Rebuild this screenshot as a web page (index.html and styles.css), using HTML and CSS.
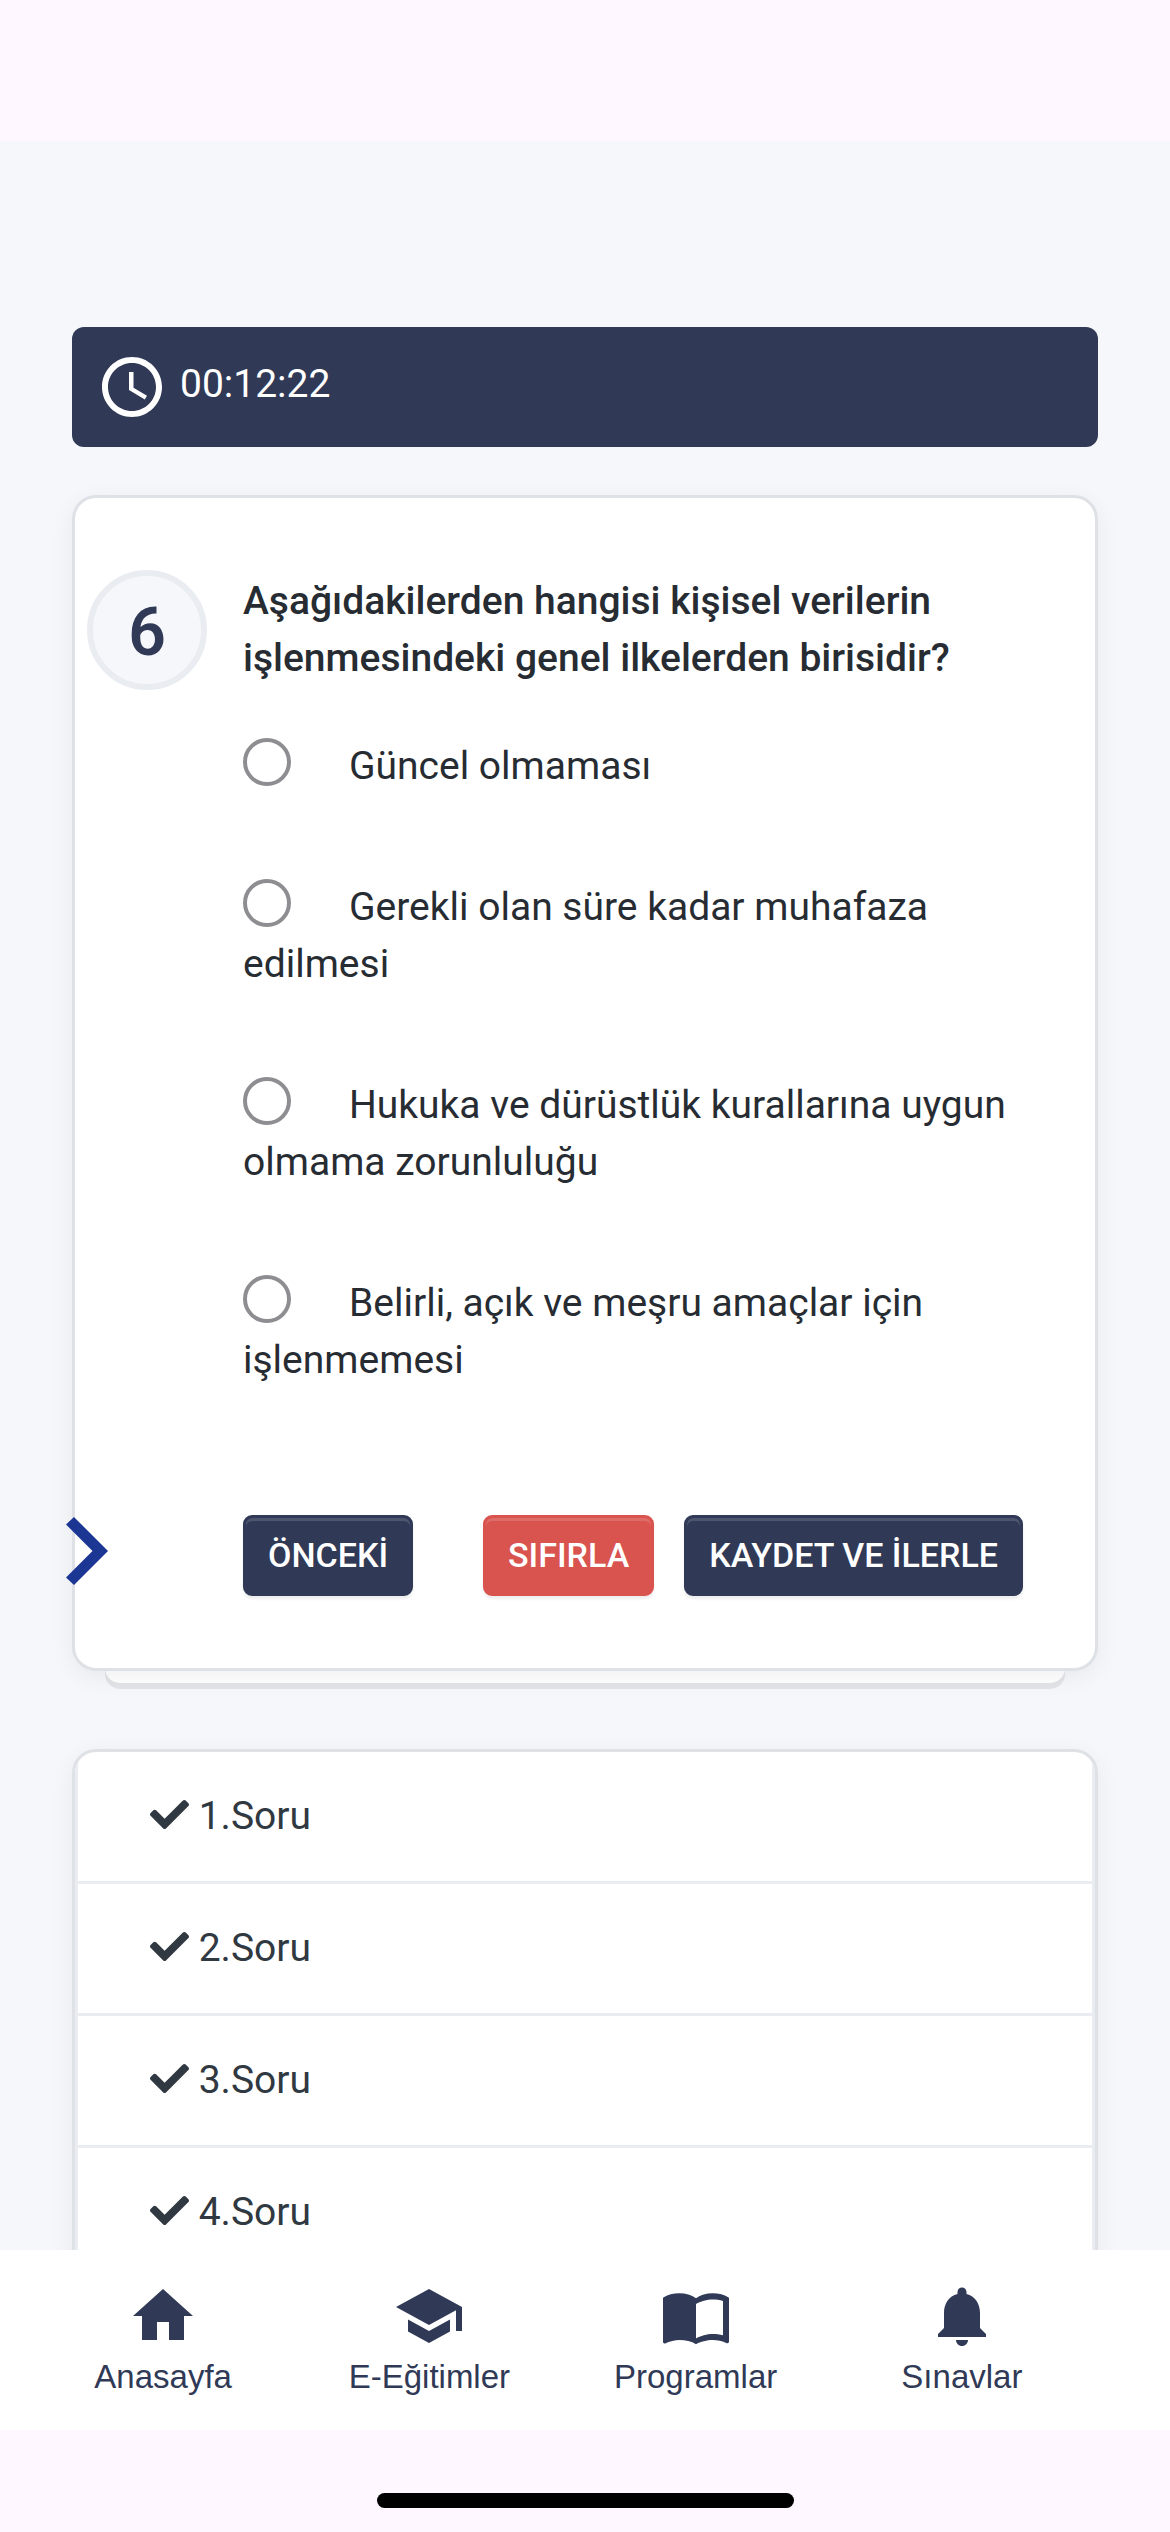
FILE: index.html
```html
<!DOCTYPE html>
<html lang="tr">
<head>
    <meta charset="UTF-8">
    <meta name="viewport" content="width=device-width, initial-scale=1.0">
    <title>Sınav</title>
    <link rel="stylesheet" href="styles.css">
</head>
<body>

<div class="status-bar"></div>

<main class="content">
    <div class="timer">
        <svg class="timer-icon" viewBox="2 2 20 20" aria-hidden="true">
            <path d="M11.99 2C6.47 2 2 6.48 2 12s4.47 10 9.99 10C17.52 22 22 17.52 22 12S17.52 2 11.99 2zM12 20c-4.42 0-8-3.58-8-8s3.58-8 8-8 8 3.58 8 8-3.58 8-8 8zm.5-13H11v6l5.25 3.15.75-1.23-4.5-2.67z"/>
        </svg>
        <span>00:12:22</span>
    </div>

    <form class="card question-card">
        <div class="question-number">6</div>
        <div class="question-body">
            <h1 class="question-text">Aşağıdakilerden hangisi kişisel verilerin işlenmesindeki genel ilkelerden birisidir?</h1>

            <label class="option"><input type="radio" name="cevap" value="a">Güncel olmaması</label>
            <label class="option"><input type="radio" name="cevap" value="b">Gerekli olan süre kadar muhafaza edilmesi</label>
            <label class="option"><input type="radio" name="cevap" value="c">Hukuka ve dürüstlük kurallarına uygun olmama zorunluluğu</label>
            <label class="option"><input type="radio" name="cevap" value="d">Belirli, açık ve meşru amaçlar için işlenmemesi</label>

            <div class="actions">
                <button type="button" class="btn">ÖNCEKİ</button>
                <div class="actions-right">
                    <button type="reset" class="btn btn-danger">SIFIRLA</button>
                    <button type="submit" class="btn">KAYDET VE İLERLE</button>
                </div>
            </div>
        </div>
        <button type="button" class="drawer-toggle" aria-label="Menü">
            <svg viewBox="0 0 42 68" aria-hidden="true">
                <path d="M8 0L42 34 8 68 0 60.500 26.500 34 0 7.500z"/>
            </svg>
        </button>
    </form>

    <ul class="card question-list">
        <li><svg class="check" viewBox="0 0 512 512"><use href="#check"/></svg> 1.Soru</li>
        <li><svg class="check" viewBox="0 0 512 512"><use href="#check"/></svg> 2.Soru</li>
        <li><svg class="check" viewBox="0 0 512 512"><use href="#check"/></svg> 3.Soru</li>
        <li><svg class="check" viewBox="0 0 512 512"><use href="#check"/></svg> 4.Soru</li>
    </ul>
</main>

<nav class="bottom-nav">
    <a href="#">
        <svg viewBox="0 0 24 24" aria-hidden="true"><path d="M10 20v-6h4v6h5v-8h3L12 3 2 12h3v8z"/></svg>
        Anasayfa
    </a>
    <a href="#">
        <svg viewBox="0 0 24 24" aria-hidden="true"><path d="M5 13.180v4L12 21l7-3.820v-4L12 17l-7-3.820zM12 3L1 9l11 6 9-4.910V17h2V9L12 3z"/></svg>
        E-Eğitimler
    </a>
    <a href="#">
        <svg viewBox="0 0 24 24" aria-hidden="true"><path d="M12 6.050C10.500 4.900 8.500 4.400 6.500 4.400S2.450 4.800 1 5.900v14.800c0 .25.25.5.5.5.1 0 .15-.05.25-.05C3.100 20.450 5.050 20 6.500 20c1.950 0 4.050.4 5.500 1.400 1.350-.85 3.800-1.400 5.500-1.400 1.650 0 3.350.3 4.750 1.050.1.05.15.05.25.05.25 0 .5-.25.5-.5V5.900c-1.450-1.100-3.500-1.500-5.500-1.500s-4 .5-5.500 1.650zM21 18.450c-1.100-.35-2.300-.45-3.500-.45-1.700 0-4.150.65-5.500 1.500V8c1.350-.85 3.800-1.500 5.500-1.500 1.200 0 2.400.15 3.500.5z"/></svg>
        Programlar
    </a>
    <a href="#">
        <svg viewBox="0 0 24 24" aria-hidden="true"><path d="M12 22c1.100 0 2-.9 2-2h-4c0 1.100.89 2 2 2zm6-6v-5c0-3.070-1.640-5.640-4.500-6.320V4c0-.83-.67-1.500-1.500-1.500s-1.500.67-1.500 1.500v.68C7.630 5.360 6 7.920 6 11v5l-2 2v1h16v-1l-2-2z"/></svg>
        Sınavlar
    </a>
</nav>

<div class="home-area"><div class="home-indicator"></div></div>

<svg class="symbols" aria-hidden="true">
    <symbol id="check" viewBox="0 0 512 512">
        <path d="M173.898 439.404l-166.400-166.400c-9.997-9.997-9.997-26.206 0-36.204l36.203-36.204c9.997-9.998 26.207-9.998 36.204 0L192 312.690 432.095 72.596c9.997-9.997 26.207-9.997 36.204 0l36.203 36.204c9.997 9.997 9.997 26.206 0 36.204l-294.400 294.401c-9.998 9.997-26.207 9.997-36.204-.001z"/>
    </symbol>
</svg>

</body>
</html>
```

FILE: styles.css
```css
* {
    box-sizing: border-box;
}
body {
    display: flex;
    flex-direction: column;
    height: 100vh;
    margin: 0;
    background-color: #fef7ff;
    color: #272c33;
    font-family: Roboto, sans-serif;
    font-size: 39px;
    line-height: 57px;
}
.status-bar {
    flex: none;
    height: 141px;
}
.content {
    flex: 1;
    min-height: 0;
    padding: 186px 72px 0;
    overflow: hidden;
    isolation: isolate;
    background-color: #f5f7fb;
}

/* timer */
.timer {
    display: flex;
    gap: 18px;
    padding: 30px;
    border-radius: 12px;
    background-color: #303956;
    color: white;
    line-height: 54px;
}
.timer-icon {
    width: 60px;
    height: 60px;
    fill: white;
}

/* cards */
.card {
    border: 3px solid #dee1e6;
    border-radius: 24px;
    background-color: white;
    box-shadow: 0 6px 24px rgba(0,0,0,0.06);
}
.question-card {
    display: flex;
    gap: 36px;
    position: relative;
    margin-top: 48px;
    padding: 72px 72px 72px 12px;
}
.question-card::after {
    content: "";
    position: absolute;
    z-index: -1;
    left: 30px;
    right: 30px;
    bottom: -15px;
    height: 48px;
    border-radius: 0 0 15px 15px;
    background-color: white;
    box-shadow: 0 6px 0 #e2e4e8;
}
.question-number {
    flex: none;
    width: 120px;
    height: 120px;
    border: 6px solid #e9edf2;
    border-radius: 50%;
    background-color: #f5f7fb;
    color: #303956;
    font-size: 66px;
    font-weight: 600;
    line-height: 114px;
    text-align: center;
}
.question-body {
    flex: 1;
    padding-top: 3px;
}
.question-text {
    margin: 0 0 51px;
    font-size: 39px;
    font-weight: 500;
}
.option {
    display: block;
    margin-bottom: 84px;
}
.option input {
    appearance: none;
    width: 48px;
    height: 48px;
    margin: 0 58px 0 0;
    border: 4px solid #8e8d91;
    border-radius: 50%;
    vertical-align: top;
}
.option input:checked {
    border-width: 14px;
    border-color: #303956;
}

/* buttons */
.actions {
    display: flex;
    justify-content: space-between;
    margin-top: 126px;
}
.actions-right {
    display: flex;
    gap: 30px;
}
.btn {
    padding: 12px 22px;
    border: 3px solid #303956;
    border-radius: 9px;
    background-color: #303956;
    box-shadow: inset 0 3px 0 rgba(255,255,255,0.15), 0 3px 3px rgba(0,0,0,0.07);
    color: white;
    font-family: Roboto, sans-serif;
    font-size: 34px;
    font-weight: 500;
    line-height: 51px;
    white-space: nowrap;
}
.btn-danger {
    border-color: #d9534f;
    background-color: #d9534f;
}
.drawer-toggle {
    position: absolute;
    left: -9px;
    bottom: 83px;
    width: 42px;
    height: 68px;
    padding: 0;
    border: none;
    background: none;
}
.drawer-toggle svg {
    display: block;
    fill: #1c3693;
}

/* question list */
.question-list {
    margin: 78px 0 0;
    padding: 0;
    overflow: hidden;
    color: #303841;
    list-style: none;
}
.question-list li {
    padding: 36px 72px;
    border: 3px solid #e9ecf1;
    border-top: none;
}
.check {
    width: 39px;
    height: 39px;
    fill: #303841;
    vertical-align: -5px;
}
.symbols {
    display: none;
}

/* bottom navigation */
.bottom-nav {
    display: grid;
    flex: none;
    grid-template-columns: repeat(4, 1fr);
    height: 180px;
    padding: 30px 75px 0 30px;
    background-color: white;
}
.bottom-nav a {
    display: flex;
    flex-direction: column;
    align-items: center;
    gap: 6px;
    color: #303956;
    font-family: "Liberation Sans", Arial, sans-serif;
    font-size: 33px;
    line-height: 38px;
    text-decoration: none;
}
.bottom-nav svg {
    width: 72px;
    height: 72px;
    fill: #303956;
}
.home-area {
    flex: none;
    height: 102px;
    padding-top: 63px;
}
.home-indicator {
    width: 417px;
    height: 15px;
    margin: 0 auto;
    border-radius: 8px;
    background-color: black;
}
```
